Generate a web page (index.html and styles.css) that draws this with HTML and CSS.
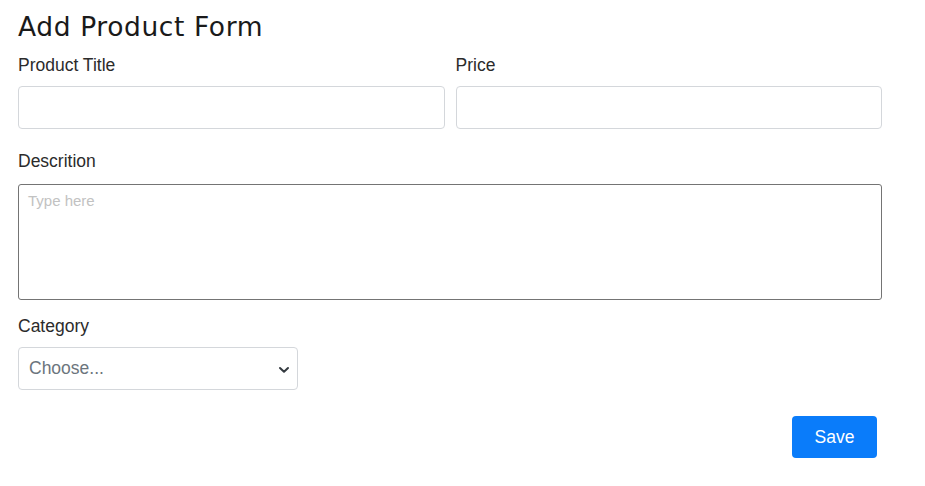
FILE: index.html
```html
<!DOCTYPE html>
<html lang="en">
<head>
<meta charset="utf-8">
<title>Add Product Form</title>
<link rel="stylesheet" href="styles.css">
</head>
<body>
<form class="form">
  <h1 class="title">Add Product Form</h1>
  <div class="row">
    <div class="field">
      <label class="label">Product Title</label>
      <input class="input" type="text">
    </div>
    <div class="field">
      <label class="label">Price</label>
      <input class="input" type="text">
    </div>
  </div>
  <div class="field field-desc">
    <label class="label">Descrition</label>
    <textarea class="textarea" placeholder="Type here"></textarea>
  </div>
  <div class="field field-cat">
    <label class="label">Category</label>
    <div class="select">
      <span class="select-text">Choose...</span>
      <svg class="chev" width="12" height="8" viewBox="0 0 12 8"><path d="M2 2 L6 5.8 L10 2" fill="none" stroke="#343a40" stroke-width="2" stroke-linecap="round" stroke-linejoin="round"/></svg>
    </div>
  </div>
  <div class="actions">
    <button class="btn" type="button">Save</button>
  </div>
</form>
</body>
</html>
```
FILE: styles.css
```css
* { box-sizing: border-box; }
html, body { margin: 0; padding: 0; background: #fff; }
body { font-family: "Liberation Sans", Arial, sans-serif; color: #212529; }
.form { width: 864px; margin: 0 0 0 18px; padding-top: 12px; display: flex; flex-direction: column; }
.title { font-family: "DejaVu Sans", "Noto Sans", sans-serif; font-weight: 400; font-size: 26.5px; letter-spacing: 0.6px; line-height: 30px; margin: 0 0 13px 0; color: #1a1a1a; }
.row { display: flex; gap: 11px; }
.field { display: flex; flex-direction: column; flex: 1; }
.label { font-size: 17.5px; line-height: 20px; color: #2b2b2b; margin-bottom: 11px; }
.input { height: 43px; border: 1px solid #d4d7db; border-radius: 4px; background: #fff; font: inherit; }
.field-desc { margin-top: 22px; }
.field-desc .label { margin-bottom: 13px; }
.textarea { height: 116px; border: 1px solid #747474; border-radius: 3px; resize: none; padding: 7px 9px; font-family: "Liberation Sans", Arial, sans-serif; font-size: 15px; line-height: 18px; }
.textarea::placeholder { color: #c2c2c2; }
.field-cat { margin-top: 16px; }
.select { width: 280px; height: 43px; border: 1px solid #d4d7db; border-radius: 4px; display: flex; align-items: center; justify-content: space-between; padding: 0 7px 0 10px; }
.select-text { font-size: 17.5px; color: #6c757d; }
.chev { display: block; margin-top: 3px; }
.actions { display: flex; justify-content: flex-end; margin-top: 26px; padding-right: 5px; }
.btn { width: 85px; height: 42px; background: #0a7cfa; color: #fff; border: none; border-radius: 4px; font-family: "Liberation Sans", Arial, sans-serif; font-size: 17.5px; }
```
